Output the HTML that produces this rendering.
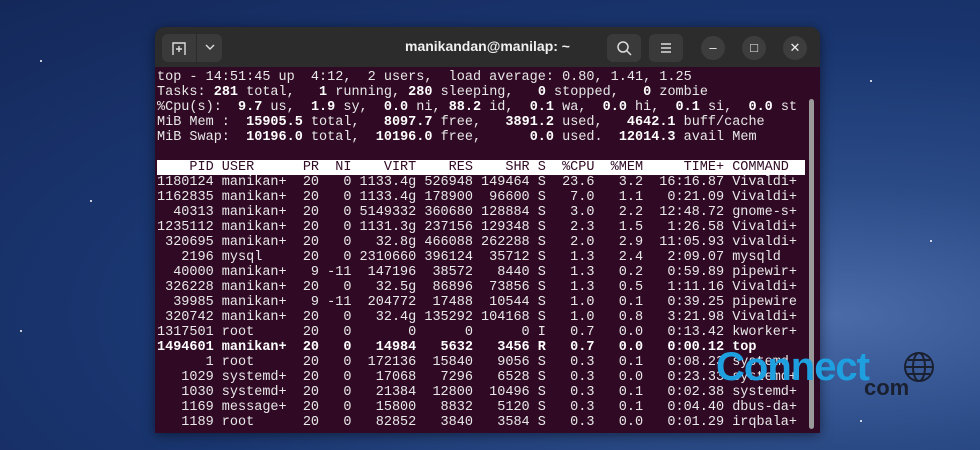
<!DOCTYPE html>
<html><head><meta charset="utf-8"><style>
html,body{margin:0;padding:0;width:980px;height:450px;overflow:hidden}
body{background:radial-gradient(ellipse at 85% 70%,#4a6aa8 0%,#2a4a86 30%,#1a3670 60%,#14285a 100%);position:relative;font-family:"Liberation Sans",sans-serif}
.star{position:absolute;background:#fff;border-radius:50%}
.win{position:absolute;left:155px;top:27px;width:665px;height:406px;background:#300a24;border-radius:10px 10px 0 0;overflow:hidden;box-shadow:0 2px 12px rgba(0,0,0,.5)}
.tb{position:absolute;left:0;top:0;width:665px;height:40px;background:#2c2c2c}
.btn{position:absolute;background:#3a3a3a;border-radius:6px}
.circ{position:absolute;width:24px;height:24px;border-radius:50%;background:#3d3d3d;color:#eee;text-align:center;line-height:24px;font-size:13px}
.title{position:absolute;left:0;width:665px;top:11px;text-align:center;color:#f0f0f0;font-weight:bold;font-size:14px}
pre{position:absolute;left:2px;top:43px;margin:0;font-family:"Liberation Mono",monospace;font-size:13.5px;line-height:15px;color:#e8e8e8}
b{color:#fff}
.hd{background:#fff;color:#300a24;display:inline-block;width:648px}
.sb{position:absolute;left:654px;top:72px;width:5px;height:330px;background:#9a9a9a;border-radius:3px}
.logo{position:absolute;left:716px;top:345px;font-family:"Liberation Sans",sans-serif;font-weight:bold;color:#1ea0e0;font-size:40px;letter-spacing:-1px}
</style></head><body>
<div class="star" style="left:40px;top:60px;width:2px;height:2px"></div>
<div class="star" style="left:90px;top:200px;width:2px;height:2px"></div>
<div class="star" style="left:20px;top:330px;width:2px;height:2px"></div>
<div class="star" style="left:870px;top:80px;width:2px;height:2px"></div>
<div class="star" style="left:930px;top:240px;width:2px;height:2px"></div>
<div class="star" style="left:860px;top:420px;width:2px;height:2px"></div>
<div class="win">
<div class="tb">
<div class="btn" style="left:7px;top:7px;width:60px;height:28px"></div>
<div style="position:absolute;left:41px;top:7px;width:1px;height:28px;background:#2c2c2c"></div>
<svg style="position:absolute;left:16px;top:13px" width="16" height="16" viewBox="0 0 16 16" fill="none" stroke="#ddd" stroke-width="1.4"><path d="M2 15V3h12v12M8 6v6M5 9h6"/></svg>
<svg style="position:absolute;left:49px;top:15px" width="12" height="10" viewBox="0 0 12 10" fill="none" stroke="#ddd" stroke-width="1.4"><path d="M2 3l4 4 4-4"/></svg>
<div class="title">manikandan@manilap: ~</div>
<div class="btn" style="left:452px;top:7px;width:34px;height:28px"></div>
<svg style="position:absolute;left:461px;top:13px" width="16" height="16" viewBox="0 0 16 16" fill="none" stroke="#ddd" stroke-width="1.5"><circle cx="7" cy="7" r="5"/><path d="M11 11l4 4"/></svg>
<div class="btn" style="left:494px;top:7px;width:34px;height:28px"></div>
<svg style="position:absolute;left:504px;top:14px" width="14" height="14" viewBox="0 0 14 14" stroke="#ddd" stroke-width="1.4"><path d="M2 3h10M2 7h10M2 11h10"/></svg>
<div class="circ" style="left:546px;top:9px">–</div>
<div class="circ" style="left:587px;top:9px">□</div>
<div class="circ" style="left:628px;top:9px">✕</div>
</div>
<pre>top - 14:51:45 up  4:12,  2 users,  load average: 0.80, 1.41, 1.25
Tasks: <b>281</b> total,   <b>1</b> running, <b>280</b> sleeping,   <b>0</b> stopped,   <b>0</b> zombie
%Cpu(s):  <b>9.7</b> us,  <b>1.9</b> sy,  <b>0.0</b> ni, <b>88.2</b> id,  <b>0.1</b> wa,  <b>0.0</b> hi,  <b>0.1</b> si,  <b>0.0</b> st
MiB Mem :  <b>15905.5</b> total,   <b>8097.7</b> free,   <b>3891.2</b> used,   <b>4642.1</b> buff/cache
MiB Swap:  <b>10196.0</b> total,  <b>10196.0</b> free,      <b>0.0</b> used.  <b>12014.3</b> avail Mem

<span class="hd">    PID USER      PR  NI    VIRT    RES    SHR S  %CPU  %MEM     TIME+ COMMAND </span>
1180124 manikan+  20   0 1133.4g 526948 149464 S  23.6   3.2  16:16.87 Vivaldi+
1162835 manikan+  20   0 1133.4g 178900  96600 S   7.0   1.1   0:21.09 Vivaldi+
  40313 manikan+  20   0 5149332 360680 128884 S   3.0   2.2  12:48.72 gnome-s+
1235112 manikan+  20   0 1131.3g 237156 129348 S   2.3   1.5   1:26.58 Vivaldi+
 320695 manikan+  20   0   32.8g 466088 262288 S   2.0   2.9  11:05.93 vivaldi+
   2196 mysql     20   0 2310660 396124  35712 S   1.3   2.4   2:09.07 mysqld
  40000 manikan+   9 -11  147196  38572   8440 S   1.3   0.2   0:59.89 pipewir+
 326228 manikan+  20   0   32.5g  86896  73856 S   1.3   0.5   1:11.16 Vivaldi+
  39985 manikan+   9 -11  204772  17488  10544 S   1.0   0.1   0:39.25 pipewire
 320742 manikan+  20   0   32.4g 135292 104168 S   1.0   0.8   3:21.98 Vivaldi+
1317501 root      20   0       0      0      0 I   0.7   0.0   0:13.42 kworker+
<b>1494601 manikan+  20   0   14984   5632   3456 R   0.7   0.0   0:00.12 top</b>
      1 root      20   0  172136  15840   9056 S   0.3   0.1   0:08.23 systemd
   1029 systemd+  20   0   17068   7296   6528 S   0.3   0.0   0:23.33 systemd+
   1030 systemd+  20   0   21384  12800  10496 S   0.3   0.1   0:02.38 systemd+
   1169 message+  20   0   15800   8832   5120 S   0.3   0.1   0:04.40 dbus-da+
   1189 root      20   0   82852   3840   3584 S   0.3   0.0   0:01.29 irqbala+</pre>
<div class="sb"></div>
</div>
<div class="logo">Connect</div>
<div style="position:absolute;left:864px;top:375px;font-weight:bold;font-size:22px;color:#1a2030;font-family:'Liberation Sans',sans-serif">com</div>
<svg style="position:absolute;left:903px;top:351px" width="32" height="32" viewBox="0 0 32 32" fill="none" stroke="#1a2030" stroke-width="2"><circle cx="16" cy="16" r="14"/><ellipse cx="16" cy="16" rx="6" ry="14"/><path d="M2 16h28M5 9h22M5 23h22"/></svg>
</body></html>
